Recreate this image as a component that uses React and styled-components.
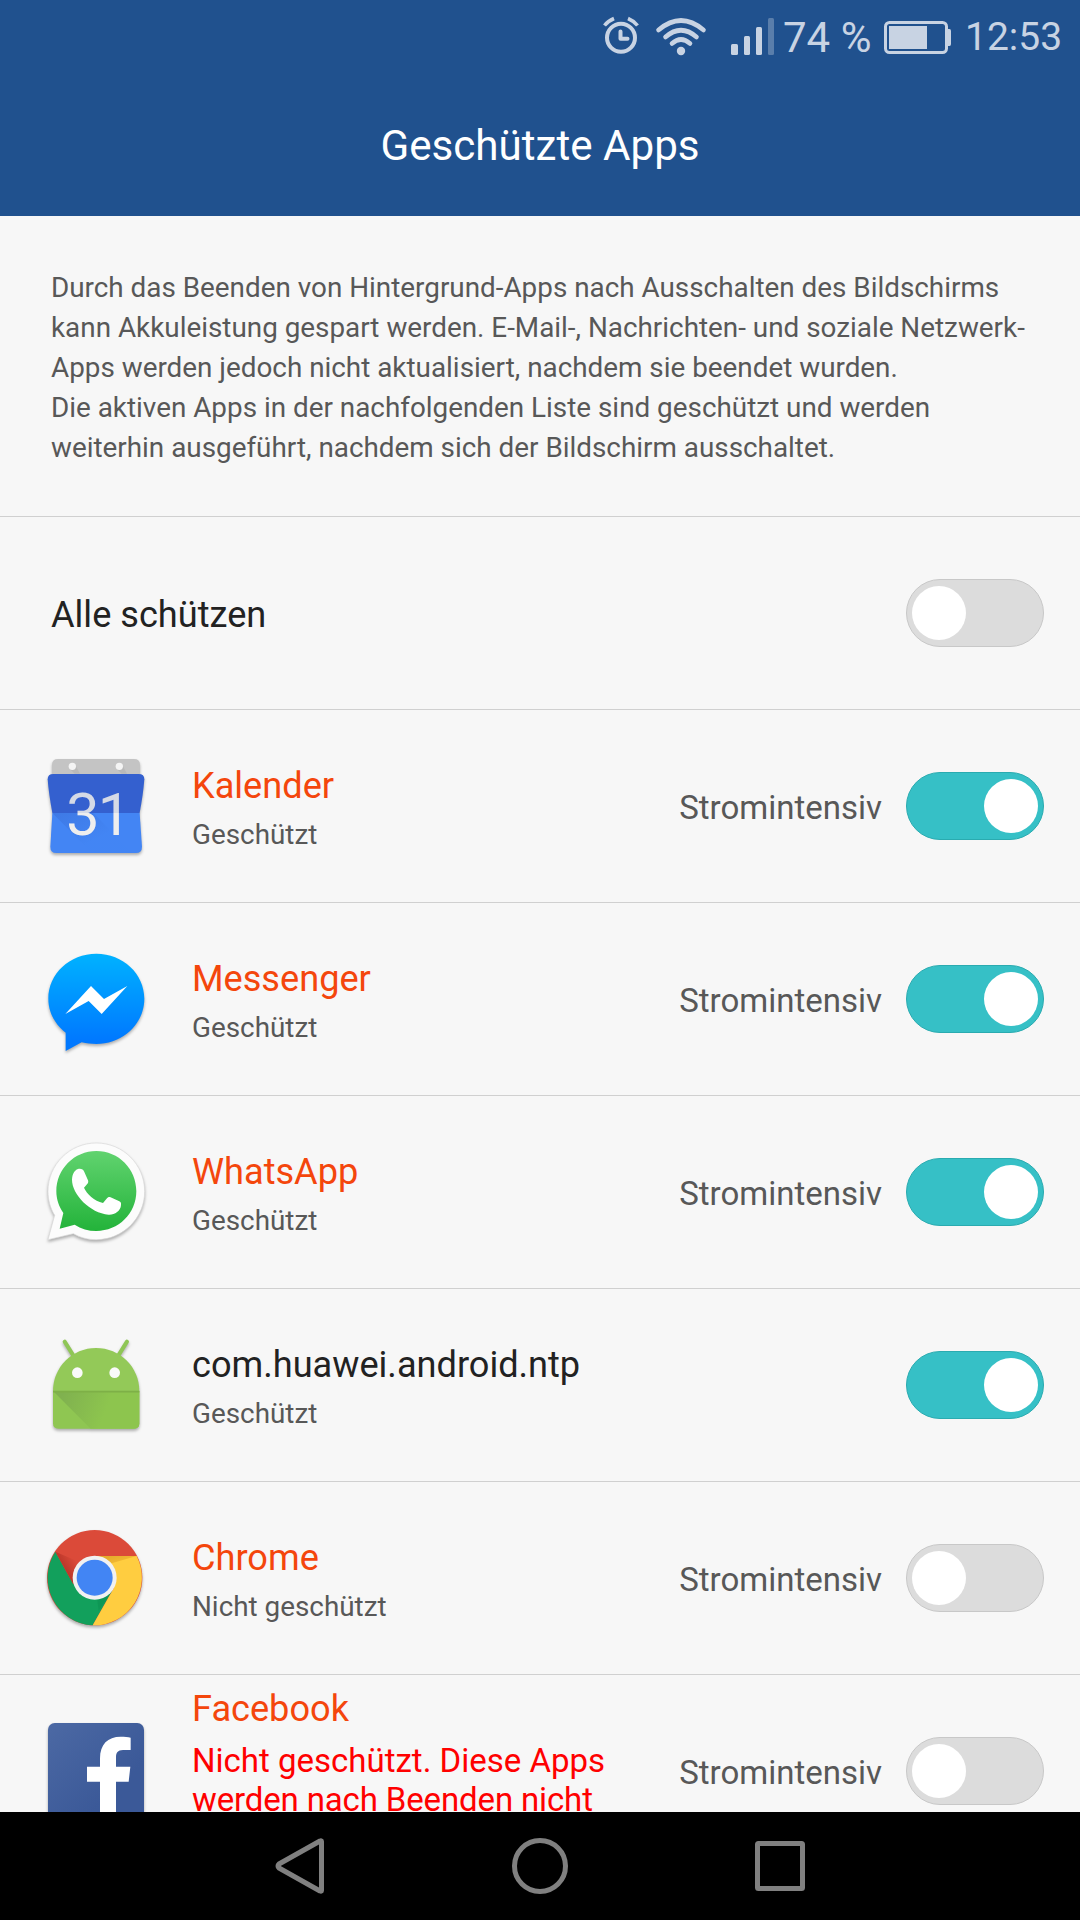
import React, { useState } from "react";
import styled, { createGlobalStyle } from "styled-components";

const GlobalStyle = createGlobalStyle`
  * {
    box-sizing: border-box;
  }
  body {
    margin: 0;
    background: #f7f7f7;
    font-family: Roboto, "Noto Sans", sans-serif;
  }
`;

const Screen = styled.div`
  width: 1080px;
  height: 1920px;
  display: flex;
  flex-direction: column;
  overflow: hidden;
  background: #f7f7f7;
`;

const Header = styled.header`
  height: 216px;
  flex-shrink: 0;
  background: #20518e;
`;

const StatusBar = styled.div`
  height: 75px;
  padding-right: 18px;
  display: flex;
  justify-content: flex-end;
  align-items: center;
  color: #c8d3e3;
`;

const StatusIcons = styled.svg`
  width: 180px;
  height: 75px;
`;

const BatteryIcon = styled.svg`
  width: 75px;
  height: 75px;
`;

const StatusText = styled.span`
  width: ${(props) => props.$width}px;
  padding-left: ${(props) => props.$indent}px;
  font-size: ${(props) => props.$size}px;
  line-height: 75px;
  height: 75px;
  white-space: nowrap;
`;

const PageTitle = styled.h1`
  margin: 0;
  height: 141px;
  line-height: 141px;
  text-align: center;
  font-size: 42.15px;
  font-weight: 400;
  color: #fff;
`;

const Content = styled.main`
  flex: 1;
  min-height: 0;
  overflow: hidden;
`;

const Info = styled.p`
  margin: 0;
  height: 301px;
  padding: 52px 0 0 51px;
  border-bottom: 1px solid #d0d0d0;
  font-size: 27.85px;
  line-height: 40px;
  white-space: nowrap;
  color: #585858;
`;

const Row = styled.div`
  height: 193px;
  padding-right: 36px;
  padding-left: ${(props) => (props.$plain ? 51 : 42)}px;
  display: flex;
  align-items: center;
  border-bottom: 1px solid #d0d0d0;
`;

const AppIcon = styled.svg`
  width: 108px;
  height: 108px;
  margin-right: 42px;
  flex-shrink: 0;
  filter: drop-shadow(0 2px 1.5px rgba(0, 0, 0, 0.3));
`;

const RowText = styled.div`
  flex: 1;
  min-width: 0;
  padding-top: 4px;
  ${(props) => props.$long && "align-self: flex-start; padding-top: 13px;"}
`;

const Name = styled.div`
  font-size: 36.15px;
  line-height: 42px;
  color: ${(props) => (props.$hungry ? "#f4460c" : "#222")};
`;

const Status = styled.div`
  margin-top: 12px;
  font-size: 27.85px;
  line-height: 32px;
  color: #585858;
`;

const Warning = styled.div`
  margin-top: 11px;
  font-size: 33px;
  line-height: 39px;
  white-space: nowrap;
  color: #f00;
`;

const TightLine = styled.span`
  letter-spacing: -0.14px;
`;

const Usage = styled.span`
  margin-right: 24px;
  padding-top: 2px;
  font-size: 33px;
  color: #585858;
`;

const Switch = styled.button`
  width: 138px;
  height: 68px;
  padding: 6px 5px;
  display: flex;
  flex-shrink: 0;
  justify-content: ${(props) => (props.$on ? "flex-end" : "flex-start")};
  border: 1px solid ${(props) => (props.$on ? "#2aabb0" : "#c8c8c8")};
  border-radius: 34px;
  background: ${(props) => (props.$on ? "#36c0c6" : "#dcdcdc")};
`;

const Knob = styled.span`
  width: 54px;
  height: 54px;
  border-radius: 50%;
  background: #fff;
`;

const NavBar = styled.nav`
  height: 108px;
  flex-shrink: 0;
  display: grid;
  grid-template-columns: repeat(3, 240px);
  justify-content: center;
  align-items: center;
  justify-items: center;
  background: #000;
`;

const NavIcon = styled.svg`
  width: 60px;
  height: 60px;
  fill: none;
  stroke: #808080;
  stroke-width: 5;
  stroke-linejoin: round;
`;

const CalendarIcon = () => (
  <AppIcon viewBox="36 36 324 324">
    <defs>
      <linearGradient id="digits" gradientUnits="userSpaceOnUse" x1="0" y1="150" x2="0" y2="290">
        <stop offset="0.49" stopColor="#d5dae6" />
        <stop offset="0.49" stopColor="#eeeeee" />
      </linearGradient>
      <linearGradient id="fold" x1="0" y1="0" x2="1" y2="1">
        <stop offset="0" stopColor="#3a6fd8" />
        <stop offset="0.6" stopColor="#4285f4" />
      </linearGradient>
    </defs>
    <path d="M66 110V74Q66 57 84 57H312Q330 57 330 74V110Z" fill="#c4c4c4" />
    <path d="M120 87L134 71L150 101H134ZM261 87L275 71L291 101H275Z" fill="#b9b9b9" />
    <circle cx="127" cy="79" r="11" fill="#f4f4f4" />
    <circle cx="268" cy="79" r="11" fill="#f4f4f4" />
    <path d="M67 219H329L336 320Q336 339 318 339H79Q61 339 61 320Z" fill="#4385f4" />
    <path d="M67 219H190L306 339H186Z" fill="url(#fold)" opacity="0.55" />
    <path d="M53 118Q53 102 70 102H326Q343 102 343 118Q340 160 329 219H67Q56 160 53 118Z" fill="#3460cf" />
    <text x="109" y="284" dx="0 -6" fontSize="178" fill="url(#digits)">
      31
    </text>
  </AppIcon>
);

const MessengerIcon = () => (
  <AppIcon viewBox="36 30 324 324">
    <defs>
      <linearGradient id="bubble" x1="0" y1="0" x2="0" y2="1">
        <stop offset="0" stopColor="#00b2ff" />
        <stop offset="0.9" stopColor="#0078ff" />
      </linearGradient>
    </defs>
    <path
      d="M199 56C119 56 55 116 55 191C55 232 75 268 107 293V348L155 322C169 325 184 327 199 327C279 327 343 266 343 191C343 116 279 56 199 56Z"
      fill="url(#bubble)"
    />
    <path d="M106 237L183 153L222 192L292 153L215 237L176 198Z" fill="#fff" />
  </AppIcon>
);

const WhatsAppIcon = () => (
  <AppIcon viewBox="36 24 324 324">
    <defs>
      <linearGradient id="green" x1="0" y1="0" x2="0" y2="1">
        <stop offset="0" stopColor="#61d36f" />
        <stop offset="1" stopColor="#23b33a" />
      </linearGradient>
    </defs>
    <path
      d="M54 329L74 256C61 235 54 210 54 184C54 104 119 39 199 39C279 39 344 104 344 184C344 264 279 329 199 329C174 329 151 323 130 311Z"
      fill="#fcfcfc"
      stroke="#d8d8d8"
      strokeWidth="2"
    />
    <path
      d="M89 296L100 249C87 230 79 208 79 184C79 117 133 63 199 63C266 63 319 117 319 184C319 250 266 303 199 303C175 303 153 297 134 284Z"
      fill="url(#green)"
    />
    <path
      d="M144 117C153 115 160 118 163 126L174 151C176 156 174 160 171 163L162 173C170 191 193 213 219 219L231 205C235 200 240 200 245 203L268 214C273 217 274 220 273 225C272 244 253 255 236 254C180 249 126 193 126 149C127 132 133 121 144 117Z"
      fill="#fff"
    />
  </AppIcon>
);

const AndroidIcon = () => (
  <AppIcon viewBox="36 18 324 324">
    <defs>
      <linearGradient id="shade" gradientUnits="userSpaceOnUse" x1="100" y1="200" x2="230" y2="250">
        <stop offset="0" stopColor="#80b14f" />
        <stop offset="1" stopColor="#8dc54e" />
      </linearGradient>
    </defs>
    <path d="M104 50L132 95M291 50L263 95" stroke="#8fc656" strokeWidth="12" strokeLinecap="round" />
    <path d="M69 198C69 126 127 69 198 69C270 69 328 126 328 198Z" fill="#93c958" />
    <path d="M69 198H328V295Q328 311 312 311H85Q69 311 69 295Z" fill="#8fc652" />
    <path d="M69 198H328V295Q328 311 312 311H182Z" fill="url(#shade)" />
    <path d="M69 200H328" stroke="#7eb047" strokeWidth="5" />
    <circle cx="142" cy="143" r="16" fill="#fafafa" />
    <circle cx="254" cy="143" r="16" fill="#fafafa" />
  </AppIcon>
);

const ChromeIcon = () => (
  <AppIcon viewBox="36 27 324 324">
    <defs>
      <linearGradient id="redShade" gradientUnits="userSpaceOnUse" x1="90" y1="170" x2="140" y2="140">
        <stop offset="0" stopColor="#b03024" />
        <stop offset="1" stopColor="#db4a39" />
      </linearGradient>
      <linearGradient id="yellowShade" gradientUnits="userSpaceOnUse" x1="240" y1="123" x2="248" y2="150">
        <stop offset="0" stopColor="#e5ab2c" />
        <stop offset="1" stopColor="#f3ba32" />
      </linearGradient>
    </defs>
    <circle cx="194" cy="188" r="143" fill="#db4a39" />
    <path d="M76 110A143 143 0 0 0 188 331L246 228L194 188L130 208Z" fill="#12a05c" />
    <path d="M320 123A143 143 0 0 1 188 331L252 218L194 188V123Z" fill="#ffcd40" />
    <path d="M76 110L130 208L128 180L150 142Z" fill="url(#redShade)" />
    <path d="M204 123H320L245 145Z" fill="url(#yellowShade)" />
    <path d="M246 228L202 254L206 288Z" fill="#0b8c4d" opacity="0.45" />
    <circle cx="194" cy="188" r="66" fill="#f1f1f1" />
    <circle cx="194" cy="188" r="54" fill="#4285f4" />
  </AppIcon>
);

const FacebookIcon = () => (
  <AppIcon viewBox="0 0 324 324">
    <defs>
      <linearGradient id="fbBlue" x1="0" y1="0" x2="0.7" y2="0.7">
        <stop offset="0" stopColor="#4c69a4" />
        <stop offset="1" stopColor="#3b5998" />
      </linearGradient>
    </defs>
    <rect x="18" y="18" width="288" height="288" rx="20" fill="url(#fbBlue)" />
    <path
      d="M174 306V194H135V149H174V124C174 82 197 59 236 59C248 59 258 60 266 62V99H243C227 99 222 108 222 121V149H265L260 194H222V306Z"
      fill="#fff"
    />
  </AppIcon>
);

const apps = [
  { name: "Kalender", icon: CalendarIcon, hungry: true, on: true },
  { name: "Messenger", icon: MessengerIcon, hungry: true, on: true },
  { name: "WhatsApp", icon: WhatsAppIcon, hungry: true, on: true },
  { name: "com.huawei.android.ntp", icon: AndroidIcon, hungry: false, on: true },
  { name: "Chrome", icon: ChromeIcon, hungry: true, on: false },
  { name: "Facebook", icon: FacebookIcon, hungry: true, on: false, warn: true },
];

function Toggle(props) {
  return (
    <Switch $on={props.on} role="switch" aria-checked={props.on} onClick={props.onClick}>
      <Knob />
    </Switch>
  );
}

function AppRow({ app, onToggle }) {
  const Icon = app.icon;

  return (
    <Row>
      <Icon />
      <RowText $long={app.warn}>
        <Name $hungry={app.hungry}>{app.name}</Name>
        {app.warn ? (
          <Warning>
            Nicht geschützt. Diese Apps
            <br />
            <TightLine>werden nach Beenden nicht</TightLine>
          </Warning>
        ) : (
          <Status>{app.on ? "Geschützt" : "Nicht geschützt"}</Status>
        )}
      </RowText>
      {app.hungry && <Usage>Stromintensiv</Usage>}
      <Toggle on={app.on} onClick={onToggle} />
    </Row>
  );
}

export default function App() {
  const [list, setList] = useState(apps);
  const allOn = list.every((app) => app.on);

  const toggleApp = (name) => {
    setList(list.map((app) => (app.name === name ? { ...app, on: !app.on } : app)));
  };

  const toggleAll = () => {
    setList(list.map((app) => ({ ...app, on: !allOn })));
  };

  return (
    <Screen>
      <GlobalStyle />
      <Header>
        <StatusBar>
          {/* alarm, wifi, signal */}
          <StatusIcons viewBox="600 0 180 75" fill="none" stroke="currentColor">
            <circle cx="621" cy="37.7" r="14" strokeWidth="4" />
            <path d="M620.5 31.5V38.7H627.5" strokeWidth="4" strokeLinecap="round" strokeLinejoin="round" />
            <path d="M604.5 25.5Q608 21 614 18.5M637.5 25.5Q634 21 628 18.5" strokeWidth="3.6" />
            <g strokeWidth="4.6" strokeLinecap="round">
              <path d="M658.5 30Q681 11 703.5 30" />
              <path d="M665.5 37Q681 23.5 696.5 37" />
              <path d="M672 43.5Q681 35.5 690 43.5" />
            </g>
            <g fill="currentColor" stroke="none">
              <circle cx="681" cy="51" r="4.2" />
              <rect x="731" y="44" width="7" height="11" rx="1.5" />
              <rect x="744" y="36" width="6" height="19" rx="1.5" />
              <rect x="756" y="27" width="6" height="28" rx="1.5" />
              <rect x="768" y="18" width="6" height="37" rx="1.5" opacity="0.35" />
            </g>
          </StatusIcons>
          <StatusText $width={100} $indent={3} $size={42}>74 %</StatusText>
          <BatteryIcon viewBox="880 0 75 75">
            <rect x="885.5" y="22.5" width="61" height="30" rx="4" fill="none" stroke="currentColor" strokeWidth="3" />
            <path d="M889 26H927V49H889ZM948 29H949.5Q951 29 951 31V44Q951 46 949.5 46H948Z" fill="currentColor" />
          </BatteryIcon>
          <StatusText $width={107} $indent={10} $size={39}>12:53</StatusText>
        </StatusBar>
        <PageTitle>Geschützte Apps</PageTitle>
      </Header>
      <Content>
        <Info>
          Durch das Beenden von Hintergrund-Apps nach Ausschalten des Bildschirms
          <br />
          kann Akkuleistung gespart werden. E-Mail-, Nachrichten- und soziale Netzwerk-
          <br />
          Apps werden jedoch nicht aktualisiert, nachdem sie beendet wurden.
          <br />
          Die aktiven Apps in der nachfolgenden Liste sind geschützt und werden
          <br />
          weiterhin ausgeführt, nachdem sich der Bildschirm ausschaltet.
        </Info>
        <Row $plain>
          <RowText>
            <Name>Alle schützen</Name>
          </RowText>
          <Toggle on={allOn} onClick={toggleAll} />
        </Row>
        {list.map((app) => (
          <AppRow key={app.name} app={app} onToggle={() => toggleApp(app.name)} />
        ))}
      </Content>
      <NavBar>
        <NavIcon viewBox="0 0 60 60">
          <path d="M51.5 5.5V54.5Q51.5 55.5 50 55L9 32Q7 30 9 28L50 5Q51.5 4.5 51.5 5.5Z" />
        </NavIcon>
        <NavIcon viewBox="0 0 60 60">
          <circle cx="30" cy="30" r="25.5" />
        </NavIcon>
        <NavIcon viewBox="0 0 60 60">
          <rect x="7.5" y="7.5" width="45" height="45" rx="1" />
        </NavIcon>
      </NavBar>
    </Screen>
  );
}
